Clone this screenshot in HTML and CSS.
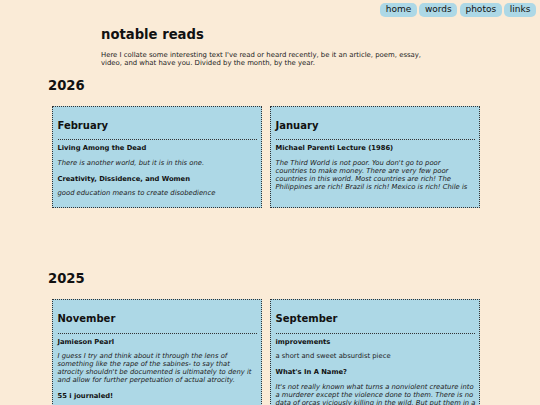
FILE: index.html
```html
<!DOCTYPE html>
<html lang="en">
<head>
<meta charset="utf-8">
<title>notable reads</title>
<link rel="stylesheet" href="styles.css">
</head>
<body>
<nav class="nav">
  <a class="pill" href="#">home</a>
  <a class="pill" href="#">words</a>
  <a class="pill" href="#">photos</a>
  <a class="pill" href="#">links</a>
</nav>
<header class="header">
  <h1 class="title">notable reads</h1>
  <p class="intro">Here I collate some interesting text I've read or heard recently, be it an article, poem, essay, video, and what have you. Divided by the month, by the year.</p>
</header>
<main class="main">
  <section class="year">
    <h2 class="year-title">2026</h2>
    <div class="grid">
      <div class="card">
        <h3 class="month">February</h3>
        <div class="entries">
          <p class="t">Living Among the Dead</p>
          <p class="d i">There is another world, but it is in this one.</p>
          <p class="t">Creativity, Dissidence, and Women</p>
          <p class="d i">good education means to create disobedience</p>
        </div>
      </div>
      <div class="card">
        <h3 class="month">January</h3>
        <div class="entries">
          <p class="t">Michael Parenti Lecture (1986)</p>
          <p class="d i">The Third World is not poor. You don't go to poor<br>countries to make money. There are very few poor<br>countries in this world. Most countries are rich! The<br>Philippines are rich! Brazil is rich! Mexico is rich! Chile is</p>
        </div>
      </div>
    </div>
  </section>
  <section class="year">
    <h2 class="year-title">2025</h2>
    <div class="grid">
      <div class="card">
        <h3 class="month">November</h3>
        <div class="entries">
          <p class="t">Jamieson Pearl</p>
          <p class="d i">I guess I try and think about it through the lens of something like the rape of the sabines- to say that atrocity shouldn't be documented is ultimately to deny it and allow for further perpetuation of actual atrocity.</p>
          <p class="t">55 i journaled!</p>
        </div>
      </div>
      <div class="card">
        <h3 class="month">September</h3>
        <div class="entries">
          <p class="t">improvements</p>
          <p class="d">a short and sweet absurdist piece</p>
          <p class="t">What's In A Name?</p>
          <p class="d i">It's not really known what turns a nonviolent creature into a murderer except the violence done to them. There is no data of orcas viciously killing in the wild. But put them in a</p>
        </div>
      </div>
    </div>
  </section>
</main>
</body>
</html>
```
FILE: styles.css
```css
html, body {
  margin: 0;
  padding: 0;
}
body {
  background: #faebd7;
  color: #111;
  font-family: "DejaVu Sans", Verdana, sans-serif;
}
.nav {
  display: flex;
  justify-content: flex-end;
  gap: 2.5px;
  padding: 3.3px 4px 0 0;
  height: 14px;
}
.pill {
  display: block;
  background: #add8e6;
  color: #111;
  text-decoration: none;
  font-size: 9px;
  line-height: 13.4px;
  padding: 0 5.6px;
  border-radius: 5px;
}
.header {
  width: 338px;
  margin: 0 auto;
}
.title {
  font-size: 13.2px;
  line-height: 15px;
  margin: 9.7px 0 0;
}
.intro {
  font-size: 6.9px;
  line-height: 8px;
  margin: 9px 0 0;
  color: #222;
}
.main {
  padding-left: 48px;
}
.year {
  margin-bottom: 63px;
}
.year-title {
  font-size: 13.2px;
  line-height: 15px;
  margin: 11px 0 13px;
}
.grid {
  display: grid;
  grid-template-columns: 210.5px 210.5px;
  column-gap: 7.5px;
  margin-left: 3.5px;
}
.card {
  background: #add8e6;
  border: 1px dotted #333;
  padding: 0 3.5px 2px 5px;
}
.month {
  font-size: 10px;
  line-height: 12px;
  margin: 13px 1px 0 0;
  padding-bottom: 7.5px;
  border-bottom: 1px dotted #333;
}
.entries p {
  line-height: 8px;
  margin: 6.5px 0;
}
.entries p:first-child {
  margin-top: 4px;
}
.t {
  font-size: 6.75px;
  font-weight: bold;
}
.d {
  font-size: 6.8px;
  color: #222;
  margin-bottom: 8px !important;
}
.i {
  font-style: italic;
}
```
